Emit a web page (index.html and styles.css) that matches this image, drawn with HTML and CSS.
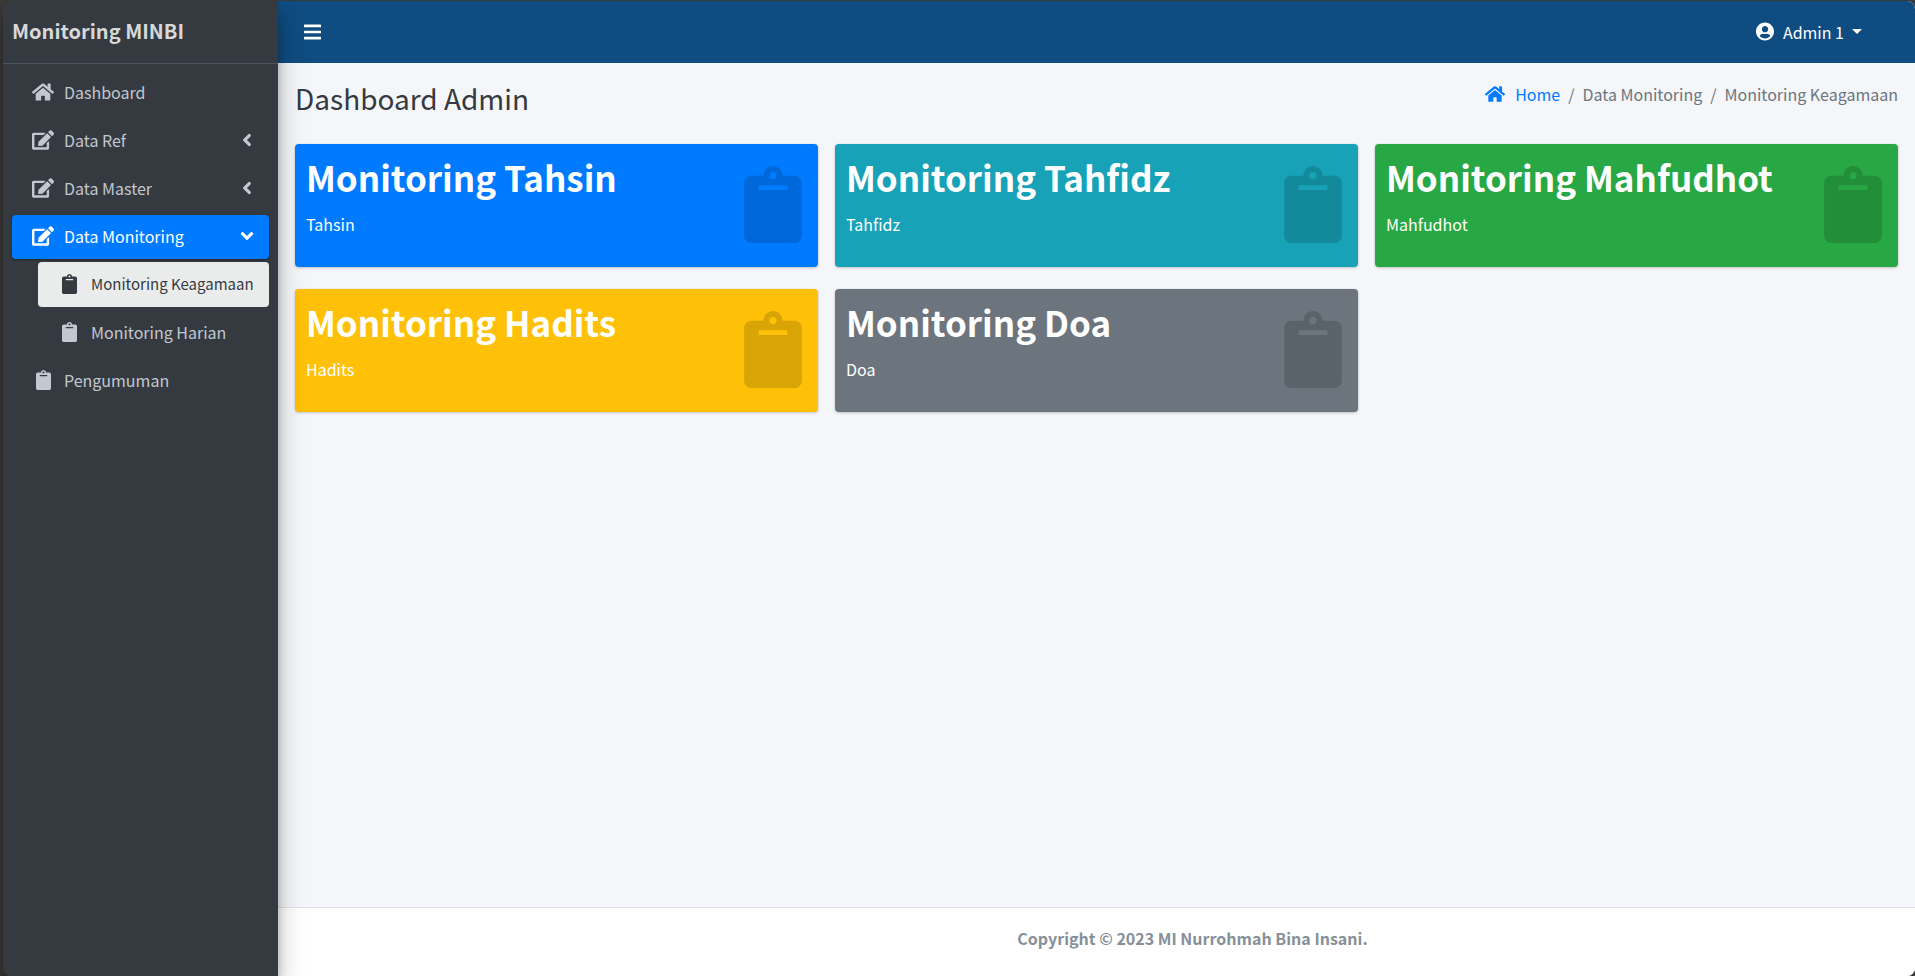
FILE: index.html
```html
<!DOCTYPE html>
<html lang="id">
<head>
<meta charset="utf-8">
<meta name="viewport" content="width=device-width, initial-scale=1">
<title>Monitoring MINBI</title>
<link rel="stylesheet" href="styles.css">
</head>
<body>
<svg class="sprite" aria-hidden="true">
  <symbol id="home" viewBox="0 0 576 512"><path d="M280.37 148.26L96 300.11V464a16 16 0 0 0 16 16l112.06-.29a16 16 0 0 0 15.92-16V368a16 16 0 0 1 16-16h64a16 16 0 0 1 16 16v95.64a16 16 0 0 0 16 16.05L464 480a16 16 0 0 0 16-16V300L295.67 148.26a12.19 12.19 0 0 0-15.3 0zM571.6 251.47L488 182.56V44.05a12 12 0 0 0-12-12h-56a12 12 0 0 0-12 12v72.61L318.47 43a48 48 0 0 0-61 0L4.34 251.47a12 12 0 0 0-1.6 16.9l25.5 31A12 12 0 0 0 45.15 301l235.22-193.74a12.19 12.19 0 0 1 15.3 0L530.9 301a12 12 0 0 0 16.9-1.6l25.5-31a12 12 0 0 0-1.7-16.93z"/></symbol>
  <symbol id="edit" viewBox="0 0 576 512"><path d="M402.6 83.2l90.2 90.2c3.8 3.8 3.8 10 0 13.8L274.4 405.6l-92.8 10.3c-12.4 1.4-22.9-9.1-21.5-21.5l10.3-92.8L388.8 83.2c3.8-3.8 10-3.8 13.8 0zm162-22.9l-48.8-48.8c-15.2-15.2-39.9-15.2-55.2 0l-35.4 35.4c-3.8 3.8-3.8 10 0 13.8l90.2 90.2c3.8 3.8 10 3.8 13.8 0l35.4-35.4c15.2-15.3 15.2-40 0-55.2zM384 346.2V448H64V128h229.8c3.2 0 6.2-1.3 8.5-3.5l40-40c7.6-7.6 2.2-20.5-8.5-20.5H48C21.5 64 0 85.5 0 112v352c0 26.5 21.5 48 48 48h352c26.5 0 48-21.5 48-48V306.2c0-10.7-12.9-16-20.5-8.5l-40 40c-2.2 2.3-3.5 5.3-3.5 8.5z"/></symbol>
  <symbol id="clipboard" viewBox="0 0 384 512"><path d="M384 112v352c0 26.51-21.49 48-48 48H48c-26.51 0-48-21.49-48-48V112c0-26.51 21.49-48 48-48h80c0-35.29 28.71-64 64-64s64 28.71 64 64h80c26.51 0 48 21.49 48 48zM192 40c-13.255 0-24 10.745-24 24s10.745 24 24 24 24-10.745 24-24-10.745-24-24-24m96 114v-20a6 6 0 0 0-6-6H102a6 6 0 0 0-6 6v20a6 6 0 0 0 6 6h180a6 6 0 0 0 6-6z"/></symbol>
  <symbol id="bars" viewBox="0 0 448 512"><path d="M16 132h416c8.8 0 16-7.2 16-16V76c0-8.8-7.2-16-16-16H16C7.2 60 0 67.2 0 76v40c0 8.8 7.2 16 16 16zm0 160h416c8.8 0 16-7.2 16-16v-40c0-8.8-7.2-16-16-16H16c-8.8 0-16 7.2-16 16v40c0 8.8 7.2 16 16 16zm0 160h416c8.8 0 16-7.2 16-16v-40c0-8.8-7.2-16-16-16H16c-8.8 0-16 7.2-16 16v40c0 8.8 7.2 16 16 16z"/></symbol>
  <symbol id="user" viewBox="0 0 496 512"><path d="M248 8C111 8 0 119 0 256s111 248 248 248 248-111 248-248S385 8 248 8zm0 96c48.6 0 88 39.4 88 88s-39.4 88-88 88-88-39.4-88-88 39.4-88 88-88zm0 344c-58.7 0-111.3-26.6-146.5-68.2 18.8-35.4 55.6-59.8 98.5-59.8 2.4 0 4.8.4 7.1 1.1 13 4.2 26.6 6.9 40.9 6.9 14.3 0 28-2.7 40.9-6.9 2.3-.7 4.7-1.1 7.1-1.1 42.9 0 79.7 24.4 98.5 59.8C359.3 421.4 306.7 448 248 448z"/></symbol>
  <symbol id="angle" viewBox="0 0 256 512"><path d="M31.7 239l136-136c9.4-9.4 24.6-9.4 33.9 0l22.6 22.6c9.4 9.4 9.4 24.6 0 33.9L127.9 256l96.4 96.4c9.4 9.4 9.4 24.6 0 33.9L201.7 409c-9.4 9.4-24.6 9.4-33.9 0l-136-136c-9.5-9.4-9.5-24.6-.1-34z"/></symbol>
</svg>

<div class="app">
  <aside class="sidebar">
    <a class="brand" href="#">Monitoring MINBI</a>
    <nav>
      <ul class="menu">
        <li><a class="menu-link" href="#"><span class="menu-icon"><svg class="icon-wide"><use href="#home"/></svg></span>Dashboard</a></li>
        <li><a class="menu-link" href="#"><span class="menu-icon"><svg class="icon-wide"><use href="#edit"/></svg></span>Data Ref<svg class="angle"><use href="#angle"/></svg></a></li>
        <li><a class="menu-link" href="#"><span class="menu-icon"><svg class="icon-wide"><use href="#edit"/></svg></span>Data Master<svg class="angle"><use href="#angle"/></svg></a></li>
        <li>
          <a class="menu-link active" href="#"><span class="menu-icon"><svg class="icon-wide"><use href="#edit"/></svg></span>Data Monitoring<svg class="angle open"><use href="#angle"/></svg></a>
          <ul class="submenu">
            <li><a class="menu-link current" href="#"><span class="menu-icon"><svg class="icon-tall"><use href="#clipboard"/></svg></span>Monitoring Keagamaan</a></li>
            <li><a class="menu-link" href="#"><span class="menu-icon"><svg class="icon-tall"><use href="#clipboard"/></svg></span>Monitoring Harian</a></li>
          </ul>
        </li>
        <li><a class="menu-link" href="#"><span class="menu-icon"><svg class="icon-tall"><use href="#clipboard"/></svg></span>Pengumuman</a></li>
      </ul>
    </nav>
  </aside>

  <div class="page">
    <header class="topbar">
      <button class="toggle" type="button" aria-label="Menu"><svg class="bars"><use href="#bars"/></svg></button>
      <button class="account" type="button"><svg class="avatar"><use href="#user"/></svg>Admin 1<span class="caret"></span></button>
    </header>

    <main class="content">
      <div class="content-header">
        <h1>Dashboard Admin</h1>
        <nav aria-label="Breadcrumb">
          <ol class="breadcrumb">
            <li><svg class="crumb-icon"><use href="#home"/></svg><a href="#">Home</a></li>
            <li>Data Monitoring</li>
            <li>Monitoring Keagamaan</li>
          </ol>
        </nav>
      </div>
      <div class="cards">
        <section class="card blue"><div><h2>Monitoring Tahsin</h2><p>Tahsin</p></div><svg class="card-icon"><use href="#clipboard"/></svg></section>
        <section class="card teal"><div><h2>Monitoring Tahfidz</h2><p>Tahfidz</p></div><svg class="card-icon"><use href="#clipboard"/></svg></section>
        <section class="card green"><div><h2>Monitoring Mahfudhot</h2><p>Mahfudhot</p></div><svg class="card-icon"><use href="#clipboard"/></svg></section>
        <section class="card yellow"><div><h2>Monitoring Hadits</h2><p>Hadits</p></div><svg class="card-icon"><use href="#clipboard"/></svg></section>
        <section class="card gray"><div><h2>Monitoring Doa</h2><p>Doa</p></div><svg class="card-icon"><use href="#clipboard"/></svg></section>
      </div>
    </main>

    <footer class="footer">Copyright © 2023 MI Nurrohmah Bina Insani.</footer>
  </div>
</div>
</body>
</html>
```
FILE: styles.css
```css
* {
  box-sizing: border-box;
}

body {
  margin: 0;
  background: #3a3a38;
  color: #343a40;
  font: 16px/24px "Noto Sans CJK SC", "Noto Sans", sans-serif;
}

h1, h2, p, ul, ol {
  margin: 0;
  padding: 0;
}

ul, ol {
  list-style: none;
}

a {
  color: #007bff;
  text-decoration: none;
}

button {
  border: 0;
  padding: 0;
  background: none;
  color: #fff;
  font: inherit;
  cursor: pointer;
}

svg {
  display: block;
  flex: none;
  fill: currentColor;
}

.sprite {
  display: none;
}

.app {
  display: flex;
  min-height: 100vh;
  padding: 1px 0 0 3px;
}

/* Sidebar */
.sidebar {
  position: relative;
  z-index: 1;
  flex: none;
  width: 275px;
  border-radius: 8px 0 0 8px;
  background: #343a40;
  box-shadow: 0 14px 28px rgba(0, 0, 0, .25), 0 10px 10px rgba(0, 0, 0, .22);
}

.brand {
  display: flex;
  align-items: center;
  height: 63px;
  padding: 0 9px 2px;
  border-bottom: 1px solid #4b545c;
  color: #d6d8d9;
  font-size: 20px;
  font-weight: 700;
}

.menu {
  display: grid;
  gap: 4px;
  padding: 7px 9px;
}

.submenu {
  display: grid;
  gap: 3px;
  margin-top: 3px;
  padding-left: 26px;
}

.menu-link {
  display: flex;
  align-items: center;
  gap: 7px;
  height: 44px;
  padding: 0 17px 2px;
  border-radius: 4px;
  color: #c2c7d0;
  white-space: nowrap;
}

.submenu .menu-link {
  gap: 8px;
  height: 45px;
  padding-right: 12px;
}

.menu-link.active {
  background: #007bff;
  color: #fff;
  box-shadow: 0 1px 3px rgba(0, 0, 0, .12), 0 1px 2px rgba(0, 0, 0, .24);
}

.menu-link.current {
  background: #eaecec;
  color: #343a40;
  font-size: 15px;
}

.menu-icon {
  display: flex;
  justify-content: center;
  width: 28px;
}

.icon-wide {
  width: 22px;
  height: 20px;
}

.icon-tall {
  width: 15px;
  height: 20px;
}

.angle {
  width: 10px;
  height: 20px;
  margin-left: auto;
}

.angle.open {
  transform: rotate(-90deg);
}

/* Page */
.page {
  display: flex;
  flex: 1;
  flex-direction: column;
  min-width: 0;
  border-radius: 0 8px 8px 0;
  background: #f4f6f9;
  overflow: hidden;
}

.topbar {
  display: flex;
  align-items: center;
  justify-content: space-between;
  height: 62px;
  padding: 0 53px 0 26px;
  background: #0f4c81;
}

.bars {
  width: 17px;
  height: 20px;
}

.account {
  display: flex;
  align-items: center;
  padding-bottom: 1px;
}

.avatar {
  width: 18px;
  height: 19px;
  margin-right: 9px;
}

.caret {
  margin-left: 8px;
  border: 5px solid transparent;
  border-top-color: #fff;
  border-bottom: 0;
}

.content {
  flex: 1;
  padding: 17px;
}

.content-header {
  display: flex;
  justify-content: space-between;
  height: 64px;
}

h1 {
  font-size: 28px;
  font-weight: 400;
  line-height: 36px;
}

.breadcrumb {
  display: flex;
  padding-top: 2px;
  color: #6c757d;
}

.breadcrumb li {
  display: flex;
  align-items: center;
}

.breadcrumb li + li::before {
  content: "/";
  padding: 0 8px;
}

.crumb-icon {
  width: 20px;
  height: 18px;
  margin-right: 10px;
  fill: #007bff;
}

/* Cards */
.cards {
  display: grid;
  grid-template-columns: repeat(3, 1fr);
  gap: 22px 17px;
}

.card {
  display: flex;
  justify-content: space-between;
  height: 123px;
  padding: 11px 16px 11px 11px;
  border-radius: 4px;
  color: #fff;
  box-shadow: 0 0 1px rgba(0, 0, 0, .13), 0 1px 3px rgba(0, 0, 0, .2);
}

.card h2 {
  margin-bottom: 13px;
  font-size: 35px;
  font-weight: 700;
  line-height: 44px;
  white-space: nowrap;
}

.card-icon {
  width: 58px;
  height: 77px;
  margin-top: 11px;
  fill: rgba(0, 0, 0, .15);
}

.blue { background: #007bff; }
.teal { background: #17a2b8; }
.green { background: #28a745; }
.yellow { background: #ffc107; }
.gray { background: #6c757d; }

.footer {
  height: 69px;
  padding: 18px 0 18px 192px;
  border-top: 1px solid #dee2e6;
  background: #fff;
  color: #869099;
  font-weight: 700;
  text-align: center;
}
```
